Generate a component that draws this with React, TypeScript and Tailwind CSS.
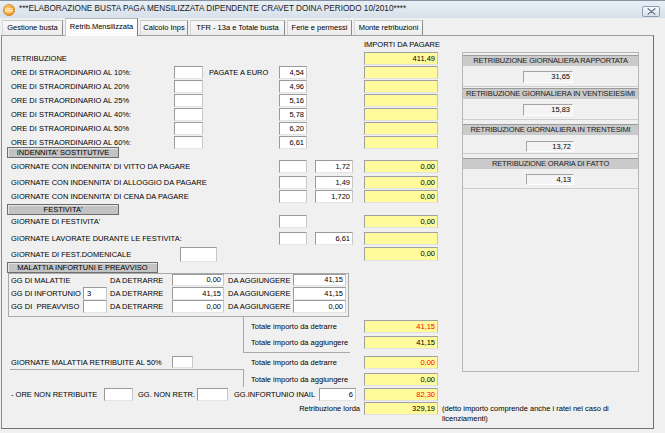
import React from "react";

type BoxProps = { v?: string; w: string; h?: string; left?: boolean };

function Box({ v = "", w, h = "h-[13px]", left = false }: BoxProps) {
  return (
    <div
      className={`${w} ${h} shrink-0 flex items-center ${left ? "justify-start pl-[3px]" : "justify-end pr-[2px]"} bg-white border border-t-[#9a9a9a] border-l-[#9a9a9a] border-r-[#c8c8c8] border-b-[#e4e4e4]`}
    >
      {v}
    </div>
  );
}

function Yel({ v = "", red = false, h = "h-[13px]" }: { v?: string; red?: boolean; h?: string }) {
  return (
    <div
      className={`w-[74px] ${h} shrink-0 flex items-center justify-end pr-[2px] bg-[#fffb9c] border border-t-[#a0a0a0] border-l-[#a0a0a0] border-r-[#c4c4c4] border-b-[#e2e2e2] ${red ? "text-[#ff0000]" : "text-black"}`}
    >
      {v}
    </div>
  );
}

function Cell({ w, children, cls = "" }: { w: string; children?: React.ReactNode; cls?: string }) {
  return <div className={`${w} h-[13px] shrink-0 flex items-center whitespace-pre ${cls}`}>{children}</div>;
}

function SecHead({ w, children, cls = "" }: { w: string; children: React.ReactNode; cls?: string }) {
  return (
    <div
      className={`${w} h-[11px] ml-[5px] shrink-0 flex items-center justify-center bg-[#c3c3c3] border border-[#6e6e6e] shadow-[inset_1px_1px_0_#e6e6e6] whitespace-nowrap ${cls}`}
    >
      {children}
    </div>
  );
}

function TitleBar() {
  return (
    <div className="h-[18px] flex items-start bg-linear-to-b from-[#e9eff5] to-[#d7e0ea] border-t border-[#8792a0]">
      <svg className="ml-[3px] mt-[3px]" width="12" height="12" viewBox="0 0 12 12">
        <defs>
          <radialGradient id="og" cx="0.4" cy="0.35" r="0.7">
            <stop offset="0" stopColor="#ffd27a" />
            <stop offset="1" stopColor="#ee8a0c" />
          </radialGradient>
        </defs>
        <circle cx="6" cy="6" r="5.6" fill="url(#og)" stroke="#c96f00" strokeWidth="0.6" />
        <rect x="2.2" y="4.4" width="7.6" height="0.9" fill="#fff4d6" />
        <rect x="2" y="6" width="8" height="0.9" fill="#fff4d6" />
        <rect x="2.6" y="7.6" width="6.8" height="0.9" fill="#fff4d6" />
      </svg>
      <div className="ml-[4px] mt-[4px] text-[8.2px] text-[#1b1b1b] whitespace-nowrap">
        ***ELABORAZIONE BUSTA PAGA MENSILIZZATA DIPENDENTE CRAVET DOINA PERIODO 10/2010****
      </div>
      <div className="ml-auto mr-[5px] mt-[5px] w-[18px] h-[11px] rounded-[2px] border border-[#8e9cb0] bg-linear-to-b from-[#f5f8fb] to-[#d8e0ea] flex items-center justify-center">
        <svg width="9" height="7" viewBox="0 0 9 7">
          <path d="M1 0.8 L8 6.2 M8 0.8 L1 6.2" stroke="#ffffff" strokeWidth="2.6" strokeLinecap="round" />
          <path d="M1 0.8 L8 6.2 M8 0.8 L1 6.2" stroke="#5f6f84" strokeWidth="1.3" strokeLinecap="round" />
        </svg>
      </div>
    </div>
  );
}

function Tab({ w, label, sel = false }: { w: string; label: string; sel?: boolean }) {
  if (sel) {
    return (
      <div
        className={`${w} h-[18px] -mb-px relative z-10 flex items-start justify-center pt-[4px] bg-[#fcfcfc] border border-b-0 border-t-[#b5b5b5] border-l-[#c9c9c9] border-r-[#7e7e7e] whitespace-nowrap`}
      >
        {label}
      </div>
    );
  }
  return (
    <div
      className={`${w} h-[15px] flex items-center justify-center bg-linear-to-b from-[#f8f8f8] to-[#ececec] border border-b-0 border-t-[#c8c8c8] border-l-[#d6d6d6] border-r-[#8a8a8a] whitespace-nowrap`}
    >
      {label}
    </div>
  );
}

function Tabs() {
  return (
    <div className="h-[17px] flex items-end pl-[2px] gap-[2px]">
      <Tab w="w-[61px]" label="Gestione busta" />
      <Tab w="w-[73px]" label="Retrib.Mensilizzata" sel />
      <Tab w="w-[48px]" label="Calcolo Inps" />
      <Tab w="w-[95px]" label="TFR - 13a  e Totale busta" />
      <Tab w="w-[65px]" label="Ferie e permessi" />
      <Tab w="w-[69px]" label="Monte retribuzioni" />
    </div>
  );
}

const ore: [string, string][] = [
  ["ORE DI STRAORDINARIO AL 10%:", "4,54"],
  ["ORE DI STRAORDINARIO AL 20%", "4,96"],
  ["ORE DI STRAORDINARIO AL 25%", "5,16"],
  ["ORE DI STRAORDINARIO AL 40%:", "5,78"],
  ["ORE DI STRAORDINARIO AL 50%", "6,20"],
  ["ORE DI STRAORDINARIO AL 60%:", "6,61"],
];

const giorn: [string, string][] = [
  ["GIORNATE CON INDENNITA' DI VITTO DA PAGARE", "1,72"],
  ["GIORNATE CON INDENNITA' DI ALLOGGIO DA PAGARE", "1,49"],
  ["GIORNATE CON INDENNITA' DI CENA DA PAGARE", "1,720"],
];

const mal: [string, boolean, string, string, string][] = [
  ["GG DI MALATTIE", false, "", "0,00", "41,15"],
  ["GG DI INFORTUNIO", true, "3", "41,15", "41,15"],
  ["GG DI  PREAVVISO", true, "", "0,00", "0,00"],
];

function Left() {
  return (
    <div className="w-[460px] shrink-0 flex flex-col pt-[4px]">
      <div className="h-[10px] flex items-center pl-[362px] whitespace-nowrap">IMPORTI DA PAGARE</div>

      <div className="mt-[2px] h-[14px] flex">
        <Cell w="w-[362px]" cls="pl-[9px]">RETRIBUZIONE</Cell>
        <Yel v="411,49" />
      </div>

      {ore.map(([l, v], i) => (
        <div key={l} className="h-[14px] flex">
          <Cell w="w-[172px]" cls="pl-[9px]">{l}</Cell>
          <Box w="w-[29px]" />
          <Cell w="w-[76px]" cls="pl-[6px]">{i === 0 ? "PAGATE A EURO" : ""}</Cell>
          <Box w="w-[28px]" v={v} />
          <div className="w-[57px] shrink-0" />
          <Yel />
        </div>
      ))}

      <div className="-mt-[3px]">
        <SecHead w="w-[112px]">INDENNITA' SOSTITUTIVE</SecHead>
      </div>

      {giorn.map(([l, v], i) => (
        <div key={l} className={`${i === 2 ? "mt-0" : "mt-[2px]"} h-[14px] flex`}>
          <Cell w="w-[277px]" cls="pl-[9px]">{l}</Cell>
          <Box w="w-[28px]" />
          <div className="w-[8px] shrink-0" />
          <Box w="w-[38px]" v={v} />
          <div className="w-[11px] shrink-0" />
          <Yel v="0,00" />
        </div>
      ))}

      <SecHead w="w-[112px]">FESTIVITA'</SecHead>

      <div className="h-[14px] flex">
        <Cell w="w-[277px]" cls="pl-[9px]">GIORNATE DI FESTIVITA'</Cell>
        <Box w="w-[28px]" />
        <div className="w-[57px] shrink-0" />
        <Yel v="0,00" />
      </div>

      <div className="mt-[3px] h-[14px] flex">
        <Cell w="w-[277px]" cls="pl-[9px]">GIORNATE LAVORATE DURANTE LE FESTIVITA:</Cell>
        <Box w="w-[28px]" />
        <div className="w-[8px] shrink-0" />
        <Box w="w-[38px]" v="6,61" />
        <div className="w-[11px] shrink-0" />
        <Yel />
      </div>

      <div className="mt-[1px] h-[15px] flex">
        <Cell w="w-[178px]" cls="pl-[9px] h-[15px]">GIORNATE DI FEST.DOMENICALE</Cell>
        <Box w="w-[37px]" h="h-[15px]" />
        <div className="w-[147px] shrink-0" />
        <Yel v="0,00" h="h-[14px]" />
      </div>

      <SecHead w="w-[151px]">MALATTIA INFORTUNI E PREAVVISO</SecHead>

      <div className="ml-[6px] w-[341px] h-[44px] border border-[#a9a9a9] flex flex-col">
        {mal.map(([l, hasBox, g, d, a], i) => (
          <div key={l} className={`${i === 0 ? "h-[12px]" : i === 1 ? "mt-[1px] h-[13px]" : "h-[13px]"} flex`}>
            <Cell w="w-[74px]" cls={`pl-[2px] ${i === 0 ? "h-[12px]" : ""}`}>{l}</Cell>
            {hasBox ? <Box w="w-[24px]" v={g} left /> : <div className="w-[24px] shrink-0" />}
            <Cell w="w-[65px]" cls={`pl-[3px] ${i === 0 ? "h-[12px]" : ""}`}>DA DETRARRE</Cell>
            <Box w="w-[52px]" v={d} h={i === 0 ? "h-[12px]" : "h-[13px]"} />
            <Cell w="w-[69px]" cls={`pl-[4px] ${i === 0 ? "h-[12px]" : ""}`}>DA AGGIUNGERE</Cell>
            <Box w="w-[53px]" v={a} h={i === 0 ? "h-[12px]" : "h-[13px]"} />
          </div>
        ))}
      </div>

      <div className="flex">
        <div className="ml-[241px] w-[107px] h-[36px] shrink-0 border-l border-b border-[#a9a9a9] pt-[3px] pl-[7px] flex flex-col">
          <Cell w="w-[100px]">Totale importo da detrarre</Cell>
          <Cell w="w-[100px]" cls="mt-[3px]">Totale importo da aggiungere</Cell>
        </div>
        <div className="ml-[14px] pt-[3px] flex flex-col">
          <Yel v="41,15" red />
          <div className="mt-[3px]">
            <Yel v="41,15" />
          </div>
        </div>
      </div>

      <div className="mt-[3px] h-[13px] flex">
        <Cell w="w-[170px]" cls="pl-[9px]">GIORNATE MALATTIA RETRIBUITE AL 50%</Cell>
        <Box w="w-[21px]" h="h-[12px]" />
        <Cell w="w-[171px]" cls="pl-[58px]">Totale importo da detrarre</Cell>
        <Yel v="0,00" red />
      </div>

      <div className="h-[18px] flex">
        <div className="ml-[8px] w-[233px] shrink-0 border-t border-[#a9a9a9]" />
        <div className="w-[195px] shrink-0 border-l border-[#a9a9a9] pt-[4px] flex items-start">
          <Cell w="w-[120px]" cls="pl-[7px]">Totale importo da aggiungere</Cell>
          <Yel v="0,00" />
        </div>
      </div>

      <div className="mt-[1px] h-[13px] flex">
        <Cell w="w-[102px]" cls="pl-[9px]">- ORE NON RETRIBUITE</Cell>
        <Box w="w-[29px]" />
        <Cell w="w-[64px]" cls="pl-[5px]">GG. NON RETR.</Cell>
        <Box w="w-[31px]" />
        <Cell w="w-[91px]" cls="pl-[6px]">GG.INFORTUNIO INAIL</Cell>
        <Box w="w-[37px]" v="6" />
        <div className="w-[8px] shrink-0" />
        <Yel v="82,30" red />
      </div>

      <div className="mt-[1px] flex items-start">
        <Cell w="w-[362px]" cls="justify-end pr-[4px]">Retribuzione lorda</Cell>
        <Yel v="329,19" />
        <div className="ml-[4px] pt-[2px] leading-[10px] whitespace-nowrap">
          (detto importo comprende anche i ratei nel caso di
          <br />
          licenziamenti)
        </div>
      </div>
    </div>
  );
}

function RHead({ children, cls }: { children: React.ReactNode; cls: string }) {
  return (
    <div
      className={`${cls} h-[11px] shrink-0 flex items-center justify-center bg-[#cacaca] border-t border-[#9b9b9b] whitespace-nowrap tracking-[-0.15px] text-[#1a1a1a]`}
    >
      {children}
    </div>
  );
}

function RBox({ v, cls }: { v: string; cls: string }) {
  return (
    <div
      className={`${cls} shrink-0 flex items-center justify-end pr-[2px] bg-[#f4f4f4] border border-t-[#a3a3a3] border-l-[#a3a3a3] border-r-[#ffffff] border-b-[#ffffff]`}
    >
      {v}
    </div>
  );
}

function Right() {
  return (
    <div className="mt-[16px] w-[177px] h-[320px] shrink-0 border border-[#b7b7b7] flex flex-col">
      <RHead cls="mt-[2px]">RETRIBUZIONE GIORNALIERA RAPPORTATA</RHead>
      <RBox v="31,65" cls="mt-[5px] ml-[60px] w-[50px] h-[12px]" />
      <div className="mt-[3px] border-t border-[#cdcdcd]" />
      <RHead cls="mt-[1px]">RETRIBUZIONE GIORNALIERA IN VENTISEIESIMI</RHead>
      <RBox v="15,83" cls="mt-[5px] ml-[60px] w-[50px] h-[12px]" />
      <div className="mt-[3px] border-t border-[#cdcdcd]" />
      <RHead cls="mt-[4px]">RETRIBUZIONE GIORNALIERA IN TRENTESIMI</RHead>
      <RBox v="13,72" cls="mt-[6px] ml-[63px] w-[48px] h-[11px]" />
      <div className="mt-[1px] border-t border-[#cdcdcd]" />
      <RHead cls="mt-[4px]">RETRIBUZIONE ORARIA DI FATTO</RHead>
      <RBox v="4,13" cls="mt-[5px] ml-[63px] w-[48px] h-[11px]" />
      <div className="mt-[3px] border-t border-[#cdcdcd]" />
    </div>
  );
}

export default function App() {
  return (
    <div className="w-[665px] h-[433px] overflow-hidden bg-[#f0f0f0] text-[7.5px] leading-none text-black font-['Liberation_Sans',Arial,sans-serif]">
      <TitleBar />
      <Tabs />
      <div className="ml-[1px] w-[653px] h-[394px] border border-t-[#a0a0a0] border-l-[#8a8a8a] border-r-[#6f6f6f] border-b-[#6f6f6f] bg-[#f0f0f0] flex">
        <Left />
        <Right />
      </div>
    </div>
  );
}
